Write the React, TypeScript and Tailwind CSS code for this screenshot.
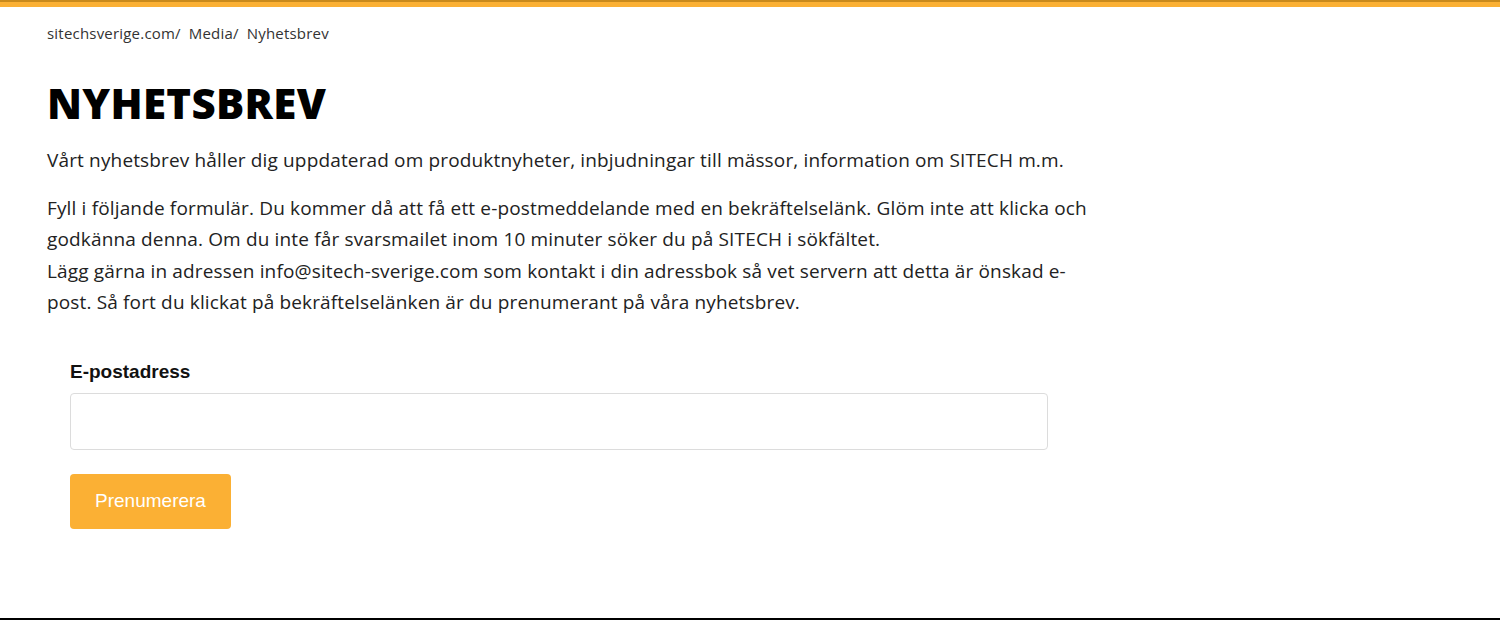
export default function App() {
  return (
    <div className="min-h-[620px] flex flex-col bg-white font-['Open_Sans',sans-serif] text-[#222]">
      {/* orange top strip with a worn dark edge */}
      <div className="h-[7px] bg-[#fbb034] border-t-[2px] border-[#c98a1c]" />

      <main className="flex-1 pl-[47px]">
        <nav className="mt-[16px] text-[15px] leading-[20px] tracking-[0.2px] text-[#333]">
          <span>sitechsverige.com</span>
          <span className="mr-[8px]">/</span>
          <span>Media</span>
          <span className="mr-[8px]">/</span>
          <span>Nyhetsbrev</span>
        </nav>

        <h1 className="mt-[32px] text-[42px] leading-[56px] font-extrabold text-black tracking-[0.3px]">
          NYHETSBREV
        </h1>

        <div className="w-[1060px] text-[19px] leading-[31.5px] tracking-[0.15px]">
          <p className="mt-[14px]">
            Vårt nyhetsbrev håller dig uppdaterad om produktnyheter, inbjudningar till mässor, information om SITECH m.m.
          </p>
          <p className="mt-[16px]">
            Fyll i följande formulär. Du kommer då att få ett e-postmeddelande med en bekräftelselänk. Glöm inte att klicka och godkänna denna. Om du inte får svarsmailet inom 10 minuter söker du på SITECH i sökfältet.
            <br />
            Lägg gärna in adressen info@sitech-sverige.com som kontakt i din adressbok så vet servern att detta är önskad e-post. Så fort du klickat på bekräftelselänken är du prenumerant på våra nyhetsbrev.
          </p>
        </div>

        <form className="mt-[41px] ml-[23px] w-[978px] font-['Liberation_Sans',Arial,sans-serif]">
          <label className="block text-[19px] leading-[24px] font-bold text-[#111]">E-postadress</label>
          <input
            type="email"
            className="mt-[9px] block w-full h-[57px] rounded-[4px] border border-[#dcdcdc] px-3 outline-none"
          />
          <button
            type="button"
            className="mt-[24px] w-[161px] h-[55px] rounded-[4px] bg-[#fbb034] text-white text-[19px]"
          >
            Prenumerera
          </button>
        </form>
      </main>

      <div className="h-[2px] bg-black" />
    </div>
  );
}
